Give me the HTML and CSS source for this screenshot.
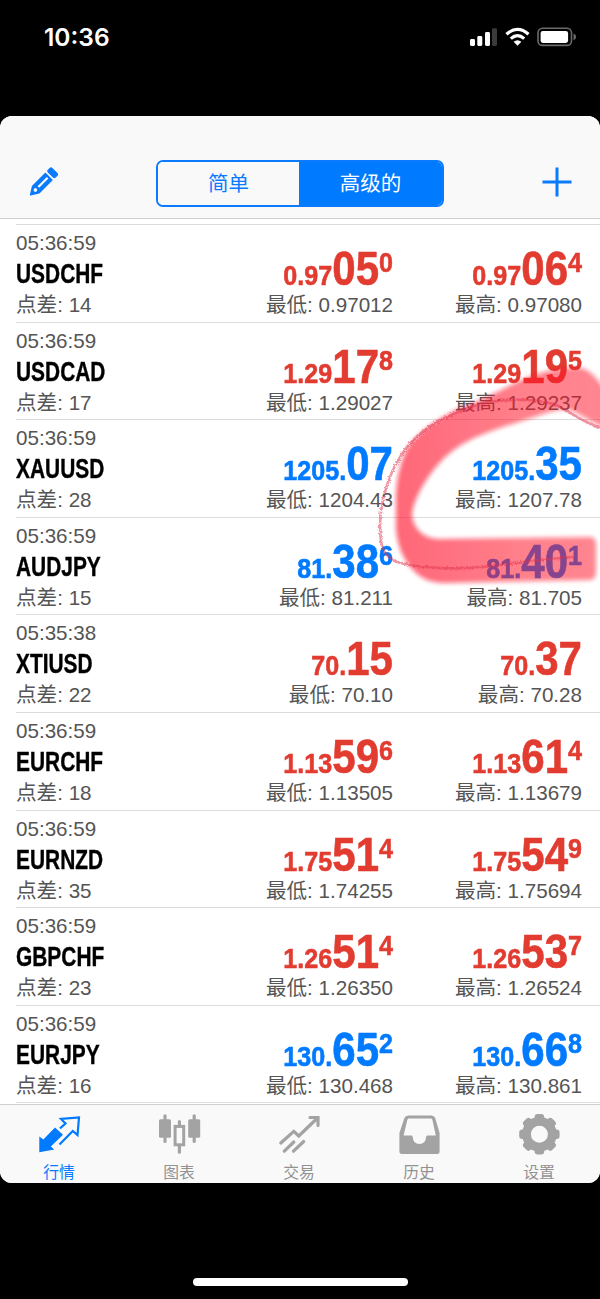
FILE: index.html
```html
<!DOCTYPE html>
<html lang="zh-CN">
<head>
    <meta charset="UTF-8">
    <meta name="viewport" content="width=device-width, initial-scale=1.0">
    <title>行情</title>
    <link rel="stylesheet" href="styles.css">
</head>
<body>
    <div class="status-bar">
        <span class="clock">10:36</span>
        <svg class="status-icons" width="108" height="20" viewBox="0 0 108 20">
            <g fill="#fff">
                <rect x="1" y="12" width="5" height="7" rx="1.4"/>
                <rect x="8.3" y="9" width="5" height="10" rx="1.4"/>
                <rect x="16" y="5" width="5" height="14" rx="1.4"/>
                <rect x="23" y="1.3" width="5" height="17.7" rx="1.4" fill="#3a3a3a"/>
            </g>
            <g fill="none" stroke="#fff" stroke-width="3.2">
                <path d="M37.5 7.2Q48.5 -2.6 59.5 7.2"/>
                <path d="M41.8 11.6Q48.5 5.6 55.2 11.6"/>
            </g>
            <path d="M44.6 14.7Q48.5 11.7 52.4 14.7L48.5 18.8Z" fill="#fff"/>
            <rect x="69" y="1.2" width="33.5" height="17.2" rx="4.5" fill="none" stroke="#6a6a6a" stroke-width="1.6"/>
            <rect x="71.6" y="3.9" width="27.5" height="12" rx="2.3" fill="#fff"/>
            <path d="M104.5 6.5q2.6 1 2.6 3.4t-2.6 3.4z" fill="#6a6a6a"/>
        </svg>
    </div>

    <div class="app">
        <div class="nav-bar">
            <svg class="pencil" width="30" height="32" viewBox="0 0 30 32">
                <g transform="translate(2.6 28.8) rotate(-45)">
                    <path d="M0 0L7.5 -4.6H25.5V4.6H7.5Z" fill="#0a7aff" stroke="#0a7aff" stroke-width="1.5" stroke-linejoin="round"/>
                    <path d="M11 0H24" stroke="#f9f9f9" stroke-width="2.2"/>
                    <circle cx="6.8" cy="0" r="1.8" fill="#f9f9f9"/>
                    <rect x="28" y="-5.6" width="6.4" height="11.2" rx="2" fill="#0a7aff"/>
                </g>
            </svg>
            <div class="segmented">
                <div class="segment">简单</div>
                <div class="segment active">高级的</div>
            </div>
            <svg class="plus" width="30" height="30" viewBox="0 0 30 30">
                <path d="M15 .5V29.5M.5 15H29.5" stroke="#0a7aff" stroke-width="3"/>
            </svg>
        </div>

        <div class="quotes" id="quotes"></div>

        <div class="tab-bar">
            <div class="tab active">
                <svg width="46" height="44" viewBox="0 0 46 44">
                    <path d="M2.3 23.5L6.3 26.5L18 14.6L26 21.8L13.8 33.6L17.3 36.5L2.3 39.2Z" fill="#007aff"/>
                    <path d="M22.5 31.5L35.8 18L40.5 22L42 4.5L24 6L28.5 10.5L23 15.3" fill="none" stroke="#007aff" stroke-width="2.2"/>
                </svg>
                <span>行情</span>
            </div>
            <div class="tab">
                <svg width="46" height="44" viewBox="0 0 46 44">
                    <g fill="#a3a3a3">
                        <rect x="2" y="6.3" width="12" height="18.5" rx="1.5"/>
                        <rect x="31.2" y="6.3" width="12" height="18.5" rx="1.5"/>
                    </g>
                    <path d="M8 2.8V28.5M37.2 2.8V28.5M22.4 8.5V13M22.4 33V39.2" stroke="#a3a3a3" stroke-width="3.2" stroke-linecap="round"/>
                    <rect x="18.1" y="13.4" width="8.6" height="18.4" fill="none" stroke="#a3a3a3" stroke-width="3"/>
                </svg>
                <span>图表</span>
            </div>
            <div class="tab">
                <svg width="46" height="44" viewBox="0 0 46 44">
                    <g fill="none" stroke="#a3a3a3" stroke-width="3.2" stroke-linecap="round">
                        <path d="M3.8 30L16.8 18.3L21.8 23L40.5 5"/>
                        <path d="M33 4.5H41V12.5"/>
                        <path d="M7.3 38.2L16.8 29"/>
                        <path d="M16.5 38.2L26.7 28.5"/>
                    </g>
                </svg>
                <span>交易</span>
            </div>
            <div class="tab">
                <svg width="46" height="44" viewBox="0 0 46 44">
                    <path fill="#a3a3a3" fill-rule="evenodd" d="M11.5 2.6H34.5Q37.3 2.6 38.3 5.2L42.6 20V38.5Q42.6 41 40 41H5Q2.4 41 2.4 38.5V20L7.3 5.2Q8.3 2.6 11.5 2.6ZM12 5.6Q10.8 5.6 10.3 7L6.6 22.6H14.5Q15.6 22.6 15.8 24.5Q16.3 31 22.4 31Q28.6 31 29 24.5Q29.2 22.6 30.4 22.6H38.8L35.4 7Q35 5.6 33.8 5.6Z"/>
                </svg>
                <span>历史</span>
            </div>
            <div class="tab">
                <svg width="46" height="44" viewBox="0 0 46 44">
                    <g fill="#a3a3a3" transform="translate(22.4 21.3)">
                        <circle r="12.9" fill="none" stroke="#a3a3a3" stroke-width="8.8"/>
                        <g id="tooth">
                            <rect x="-4.8" y="-20.2" width="9.6" height="8" rx="3"/>
                            <rect x="-4.8" y="12.2" width="9.6" height="8" rx="3"/>
                        </g>
                        <use href="#tooth" transform="rotate(45)"/>
                        <use href="#tooth" transform="rotate(90)"/>
                        <use href="#tooth" transform="rotate(135)"/>
                    </g>
                </svg>
                <span>设置</span>
            </div>
        </div>
    </div>

    <div class="home-indicator"></div>

    <!-- hand drawn marker circle over the XAUUSD price -->
    <svg class="marker" width="240" height="240" viewBox="360 350 240 240">
        <defs>
            <linearGradient id="ink" gradientUnits="userSpaceOnUse" x1="400" y1="0" x2="600" y2="0">
                <stop offset="0" stop-color="#ff142d" stop-opacity=".64"/>
                <stop offset=".25" stop-color="#ff142d" stop-opacity=".6"/>
                <stop offset=".6" stop-color="#ff1428" stop-opacity=".54"/>
                <stop offset="1" stop-color="#ff1428" stop-opacity=".52"/>
            </linearGradient>
            <filter id="soft"><feGaussianBlur stdDeviation="2"/></filter>
            <filter id="rough">
                <feTurbulence type="fractalNoise" baseFrequency="0.6" numOctaves="2"/>
                <feDisplacementMap in="SourceGraphic" scale="4"/>
            </filter>
        </defs>
        <path filter="url(#soft)" fill="url(#ink)" d="M580 368C566 367 540 371 517 382C495 393 478 402 460 408C435 420 412 437 405 453C398 470 396 485 396 500V530C398 550 406 563 414 571C424 581 434 583 447 583L590 580Q596 579 596 572V545Q596 537 590 537L440 539C425 539 414 530 412 516C412 505 420 488 432 472C442 459 452 449 470 440C490 430 520 422 537 416C550 412 562 407 573 411C584 417 592 422 607 429V393Q592 369 580 368Z"/>
        <path filter="url(#rough)" fill="none" stroke="#e0304c" stroke-opacity=".5" stroke-width="2.6" d="M604 429C587 425 575 415 558 406C542 399 507 397 477 405C447 415 426 425 407 447C390 469 380 499 380 526C380 546 383 556 397 562C417 568 452 570 482 567C512 564 542 559 574 557"/>
    </svg>

    <script>
        // [time, symbol, spread, bid, low, ask, high, direction]
        // prices are split as small|big|superscript
        const quotes = [
            ['05:36:59', 'USDCHF', 14, '0.97|05|0', '0.97012', '0.97|06|4', '0.97080', 'down'],
            ['05:36:59', 'USDCAD', 17, '1.29|17|8', '1.29027', '1.29|19|5', '1.29237', 'down'],
            ['05:36:59', 'XAUUSD', 28, '1205.|07|', '1204.43', '1205.|35|', '1207.78', 'up'],
            ['05:36:59', 'AUDJPY', 15, '81.|38|6', '81.211', '81.|40|1', '81.705', 'up'],
            ['05:35:38', 'XTIUSD', 22, '70.|15|', '70.10', '70.|37|', '70.28', 'down'],
            ['05:36:59', 'EURCHF', 18, '1.13|59|6', '1.13505', '1.13|61|4', '1.13679', 'down'],
            ['05:36:59', 'EURNZD', 35, '1.75|51|4', '1.74255', '1.75|54|9', '1.75694', 'down'],
            ['05:36:59', 'GBPCHF', 23, '1.26|51|4', '1.26350', '1.26|53|7', '1.26524', 'down'],
            ['05:36:59', 'EURJPY', 16, '130.|65|2', '130.468', '130.|66|8', '130.861', 'up']
        ];

        function price(value) {
            const [small, big, sup] = value.split('|');
            return `<div class="price"><span>${small}</span><span class="big">${big}</span><span class="sup">${sup}</span></div>`;
        }

        document.getElementById('quotes').innerHTML = quotes.map(q => `
            <div class="quote ${q[7]}">
                <div class="info">
                    <div class="label">${q[0]}</div>
                    <div class="symbol">${q[1]}</div>
                    <div class="label">点差: ${q[2]}</div>
                </div>
                <div class="side">${price(q[3])}<div class="label">最低: ${q[4]}</div></div>
                <div class="side">${price(q[5])}<div class="label">最高: ${q[6]}</div></div>
            </div>
        `).join('');
    </script>
</body>
</html>
```
FILE: styles.css
```css
* {
    box-sizing: border-box;
}
body {
    margin: 0;
    width: 600px;
    height: 1299px;
    overflow: hidden;
    background: #000;
    font-family: "Liberation Sans", "Noto Sans CJK SC", sans-serif;
    position: relative;
}
.status-bar {
    height: 116px;
    padding: 26px 23px 0 44px;
    display: flex;
    justify-content: space-between;
    align-items: flex-start;
    color: #fff;
}
.clock {
    font-family: Inter, sans-serif;
    font-size: 24.5px;
    font-weight: 600;
    line-height: 22px;
}
.status-icons {
    margin-top: 1px;
}
.app {
    height: 1067px;
    background: #fff;
    border-radius: 12px;
    overflow: hidden;
    display: flex;
    flex-direction: column;
}
.nav-bar {
    height: 103px;
    flex: none;
    padding: 44px 28px 0 28px;
    display: flex;
    justify-content: space-between;
    align-items: flex-start;
    background: #f9f9f9;
    border-bottom: 1px solid #cfcfcf;
}
.pencil {
    margin-top: 6px;
}
.plus {
    margin-top: 7px;
}
.segmented {
    width: 288px;
    height: 47px;
    display: flex;
    border: 2px solid #0a7aff;
    border-radius: 7px;
    overflow: hidden;
    background: #fff;
}
.segment {
    width: 141px;
    line-height: 44px;
    text-align: center;
    font-size: 20.5px;
    background: #f9f9f9;
    color: #0a7aff;
}
.segment.active {
    flex: 1;
    background: #007aff;
    color: #fff;
}
.quotes {
    flex: none;
    height: 880px;
    margin-top: 5px;
    margin-left: 16px;
    border-top: 1px solid #dcdcdc;
}
.quote {
    height: 97.6px;
    padding: 7px 18px 0 0;
    display: flex;
    border-bottom: 1px solid #dcdcdc;
}
.info {
    flex: 1;
}
.side {
    width: 189px;
    text-align: right;
}
.label {
    height: 22px;
    font-size: 20.6px;
    line-height: 22px;
    color: #555;
    white-space: nowrap;
}
.symbol {
    height: 40px;
    font-size: 27.5px;
    font-weight: bold;
    line-height: 40px;
    -webkit-text-stroke: .4px;
    transform: scaleX(.76);
    transform-origin: left;
}
.price {
    height: 62px;
    display: flex;
    justify-content: flex-end;
    align-items: baseline;
    font-size: 28.4px;
    font-weight: bold;
    line-height: 74px;
    -webkit-text-stroke: .6px;
    transform: scaleX(.885);
    transform-origin: right;
}
.price .big {
    font-size: 47.5px;
}
.price .sup {
    position: relative;
    top: -13px;
}
.down .price {
    color: #e23b30;
}
.up .price {
    color: #007aff;
}
.tab-bar {
    flex: 1;
    display: flex;
    background: #f9f9f9;
    border-top: 1px solid #cfcfcf;
}
.tab {
    width: 120px;
    padding-top: 8px;
    display: flex;
    flex-direction: column;
    align-items: center;
    font-size: 15.8px;
    line-height: 31px;
    color: #929292;
}
.tab span {
    margin-right: 2px;
}
.tab.active {
    color: #0a7aff;
}
.home-indicator {
    width: 215px;
    height: 8px;
    margin: 95px auto 0;
    border-radius: 4px;
    background: #fff;
}
.marker {
    position: absolute;
    left: 360px;
    top: 350px;
}
```
